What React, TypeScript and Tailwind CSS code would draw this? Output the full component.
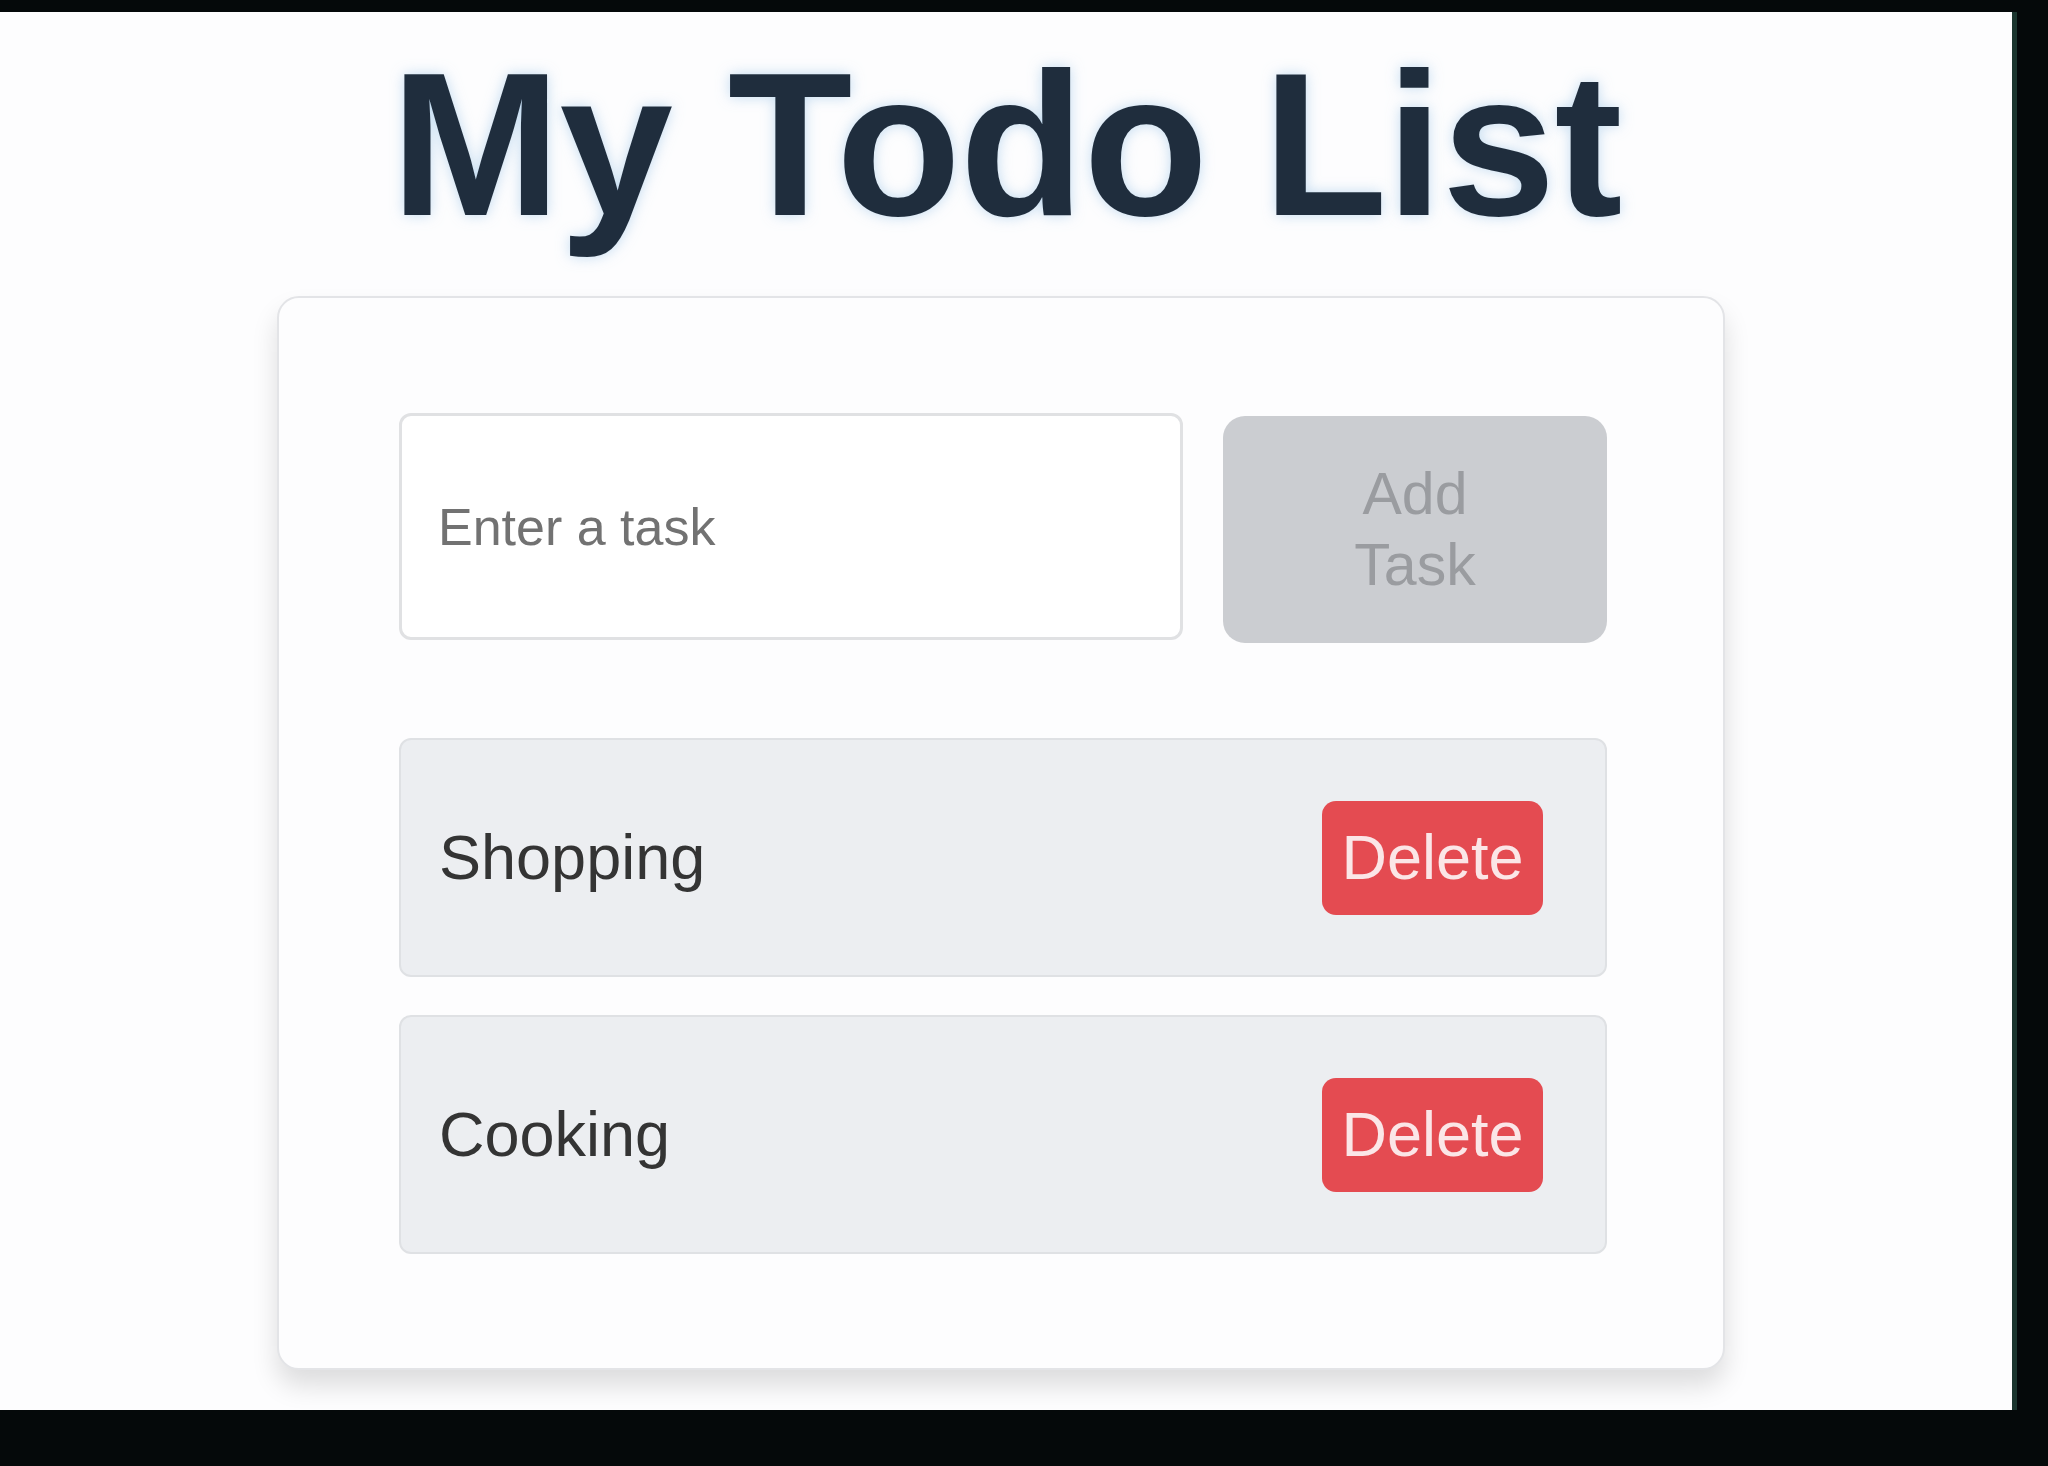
import { useState } from "react";

const font = { fontFamily: '"Liberation Sans", Arial, sans-serif' };

export default function App() {
  const [task, setTask] = useState("");
  const [todos, setTodos] = useState<string[]>(["Shopping", "Cooking"]);

  const addTask = () => {
    if (!task.trim()) return;
    setTodos([...todos, task.trim()]);
    setTask("");
  };

  return (
    <div className="w-full h-[1466px] bg-[#05090a] pt-[12px] flex flex-col overflow-hidden" style={font}>
      <div className="flex h-[1398px]">
        <div className="w-[2012px] h-full bg-[#fdfdfe] flex flex-col items-center">
          <h1 className="mt-[30px] text-[204px] leading-none font-bold tracking-[-1px] text-[#1f2d3d] [text-shadow:0_0_14px_rgba(170,205,235,0.7)]">
            My Todo List
          </h1>

          <div className="mt-[50px] mr-[10px] w-[1448px] h-[1074px] bg-[#fdfdfe] border-2 border-[#e3e4e7] rounded-[22px] shadow-[0_16px_26px_rgba(0,0,0,0.13)] pl-[120px] pr-[116px] pt-[115px]">
            <div className="flex gap-[40px] h-[227px]">
              <input
                type="text"
                value={task}
                onChange={(e) => setTask(e.target.value)}
                placeholder="Enter a task"
                className="w-[784px] h-full bg-white border-[3px] border-[#e0e1e3] rounded-[12px] pl-[36px] text-[52px] text-[#333] placeholder:text-[#727272] outline-none"
              />
              <button
                onClick={addTask}
                className="w-[384px] h-full mt-[3px] bg-[#cbcdd1] rounded-[22px] text-[59px] leading-[1.2] text-[#9a9ca0] text-center"
              >
                Add
                <br />
                Task
              </button>
            </div>

            <ul className="mt-[98px] flex flex-col gap-[38px]">
              {todos.map((t, i) => (
                <li
                  key={i}
                  className="h-[239px] bg-[#eceef1] border-2 border-[#dfe1e4] rounded-[12px] flex items-center justify-between pl-[38px] pr-[62px]"
                >
                  <span className="text-[63px] text-[#343434]">{t}</span>
                  <button
                    onClick={() => setTodos(todos.filter((_, j) => j !== i))}
                    className="w-[221px] h-[114px] bg-[#e44b51] rounded-[14px] text-[63px] text-[#fbe6e7] leading-none"
                  >
                    Delete
                  </button>
                </li>
              ))}
            </ul>
          </div>
        </div>
        <div className="w-[5px] h-full bg-[#1b352e]" />
        <div className="flex-1 h-full bg-[#05090a]" />
      </div>
    </div>
  );
}
